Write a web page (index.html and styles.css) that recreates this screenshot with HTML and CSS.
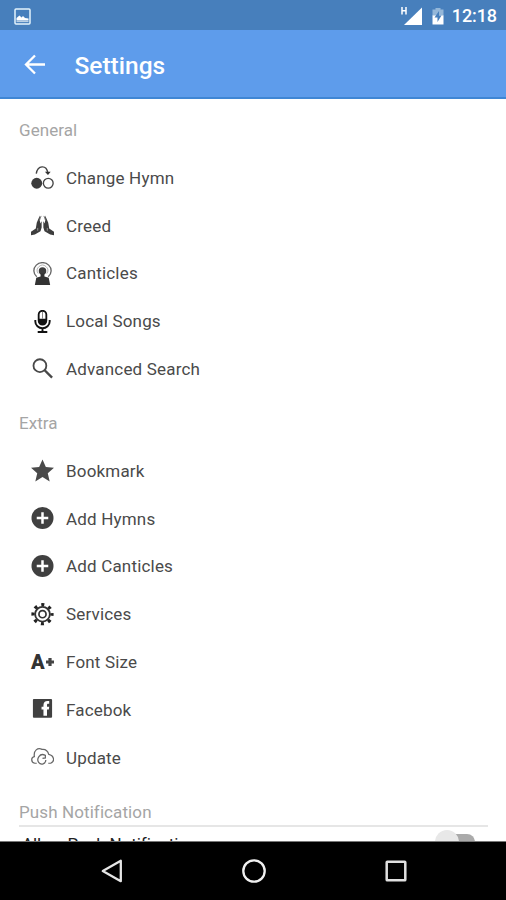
FILE: index.html
```html
<!DOCTYPE html>
<html lang="en">
<head>
<meta charset="utf-8">
<title>Settings</title>
<link rel="stylesheet" href="styles.css">
</head>
<body>
<div class="screen">
  <div class="status">
    <svg class="photo" width="17" height="17" viewBox="0 0 17 17"><rect x="1" y="1" width="15" height="15" rx="1" fill="none" stroke="#e4f4fc" stroke-width="1.5"/><path d="M2.500 12.500V10L5.500 7.500 7.500 9.500 9 8 11 10 14.500 10.500V12.500z" fill="#fff"/><path d="M2.500 13.500h12" stroke="#b9cfe4" stroke-width="1.200"/></svg>
    <svg class="signal" width="22" height="20" viewBox="0 0 22 20"><path d="M2 1v7.500M6 1v7.500M2 4.800h4" fill="none" stroke="#fff" stroke-width="1.500"/><path d="M22 1.500V19H4z" fill="#fff"/></svg>
    <svg class="battery" width="12" height="18" viewBox="0 0 12 18"><path d="M3.500 1h5v1.500H11.500V9H.5V2.500h3z" fill="#94b7d9"/><path d="M.5 8.500h11V17.500H.5z" fill="#fff"/><path d="M7 4 2.500 10.500H5.500V15L9.500 8.500H7z" fill="#477fbc"/></svg>
    <span class="clock">12:18</span>
  </div>
  <header class="bar">
    <svg width="22" height="22" viewBox="0 0 22 22"><path d="M11 2.500 2 11.500l9 9M2.500 11.500H21" fill="none" stroke="#fff" stroke-width="2.300"/></svg>
    <h1>Settings</h1>
  </header>
  <main>
    <h2>General</h2>
    <ul>
      <li><svg viewBox="0 0 24 24"><path d="M5.500 8C7 -1 16 -1.500 17.500 7" fill="none" stroke="#444" stroke-width="1.500"/><path d="M14.500 6h6l-2.800 3.500z" fill="#333"/><circle cx="6" cy="18" r="5.700" fill="#3c3c3c"/><circle cx="18" cy="18" r="5.100" fill="none" stroke="#444" stroke-width="1.400"/></svg><span>Change Hymn</span></li>
      <li><svg viewBox="0 0 24 24"><path d="M9.200 1.500 6 9 5 15 0 18.500v3.700l4-.7 5.900-3.500 1.200-4V7.500L9.500 10z" fill="#3d3d3d"/><path d="M14.800 1.500 18 9l1 6 5 3.500v3.700l-4-.7-5.900-3.500-1.200-4V7.500L14.500 10z" fill="#3d3d3d"/><path d="M10.500 2 8.500 7.500M13.500 2l2 5.500" stroke="#777" stroke-width="1"/><path d="M7 14.500v3M17 14.500v3" stroke="#999"/></svg><span>Creed</span></li>
      <li><svg viewBox="0 0 24 24"><circle cx="12" cy="9.500" r="3.900" fill="#3d3d3d"/><path d="M10 12h4v3l4.500 1.500 1.500 7.500H4l1.500-7.500L10 15z" fill="#333"/><path d="M6 15.500A9 8.500 0 1 1 18 15.500" fill="none" stroke="#666" stroke-width="1.400"/><path d="M7.500 12A5.500 5.500 0 1 1 16.500 12" fill="none" stroke="#999" stroke-width=".8"/></svg><span>Canticles</span></li>
      <li><svg viewBox="0 0 24 24"><rect x="8" y=".8" width="8" height="14.500" rx="4" fill="#fff" stroke="#111" stroke-width="1.900"/><path d="M8 9h8v2.500a4 4 0 0 1-8 0z" fill="#111"/><path d="M12 2v7" stroke="#666" stroke-width=".8"/><path d="M4.500 10.500v1.500a7.500 7 0 0 0 15 0v-1.500M12 19v4M7 23h10" fill="none" stroke="#111" stroke-width="2"/></svg><span>Local Songs</span></li>
      <li><svg viewBox="0 0 24 24"><circle cx="9.300" cy="8" r="6.700" fill="none" stroke="#484848" stroke-width="1.900"/><path d="m14 12.500 8 8" stroke="#484848" stroke-width="2.500"/></svg><span>Advanced Search</span></li>
    </ul>
    <h2 class="extra">Extra</h2>
    <ul>
      <li><svg viewBox="0 0 24 24"><path d="m12 .4 3.500 7.900 8.500.7-6.500 5.800 2 8.600L12 18.900l-7.500 4.500 2-8.600L0 9l8.500-.7z" fill="#4a4a4a"/></svg><span>Bookmark</span></li>
      <li><svg viewBox="0 0 24 24"><circle cx="12" cy="11.500" r="11.500" fill="#404040"/><path d="M12 5.500v12M6 11.500h12" stroke="#fff" stroke-width="2.600"/></svg><span>Add Hymns</span></li>
      <li><svg viewBox="0 0 24 24"><circle cx="12" cy="11.500" r="11.500" fill="#404040"/><path d="M12 5.500v12M6 11.500h12" stroke="#fff" stroke-width="2.600"/></svg><span>Add Canticles</span></li>
      <li><svg viewBox="0 0 24 24"><circle cx="12" cy="11.700" r="9.900" fill="none" stroke="#222" stroke-width="3.400" stroke-dasharray="3.200 4.575" stroke-dashoffset="1.600"/><circle cx="12" cy="11.700" r="7.700" fill="none" stroke="#333" stroke-width="1.900"/><circle cx="12" cy="11.700" r="3.700" fill="none" stroke="#333" stroke-width="1.800"/></svg><span>Services</span></li>
      <li><span class="font-icon">A<svg viewBox="0 0 8 8"><path d="M4 0v8M0 4h8" stroke="#444" stroke-width="3.200"/></svg></span><span>Font Size</span></li>
      <li><svg viewBox="0 0 24 24"><rect x="2" y="1" width="20" height="19.500" rx="1" fill="#404040"/><path d="M13 18.500V12h-2V9h2V7.500c0-3 1.500-4.500 4.300-4.500H19v3h-1c-1 0-1.300.5-1.300 1.500V9H19l-.4 3h-1.900v6.500z" fill="#fff"/></svg><span>Facebok</span></li>
      <li><svg viewBox="0 0 24 24"><path d="M6 18H4C-.5 17 0 11.500 3.500 11 2.500 4.500 7 1.500 11.500 3.500c4-.5 6 1.500 7 5.200C24 10 25.500 16 20.500 18H18" fill="none" stroke="#666" stroke-width="1.300"/><path d="M14.500 9.500C9 7 5.500 13.500 8 17c2.500 3.500 7.500 1.500 7.500-2.500M12 13l3-.5V9" fill="none" stroke="#666" stroke-width="1.300"/></svg><span>Update</span></li>
    </ul>
    <h2 class="push">Push Notification</h2>
    <div class="allow"><span>Allow Push Notification</span><i class="toggle"></i></div>
  </main>
  <nav>
    <svg width="26" height="26" viewBox="0 0 26 26"><path d="M21.800 2.800v20.400L3.800 13z" fill="none" stroke="#e6e6e6" stroke-width="2.300" stroke-linejoin="round"/></svg>
    <svg width="26" height="26" viewBox="0 0 26 26"><circle cx="13" cy="13" r="10.700" fill="none" stroke="#f0f0f0" stroke-width="2.300"/></svg>
    <svg width="26" height="26" viewBox="0 0 26 26"><rect x="3.700" y="3.700" width="18.600" height="18.600" rx=".6" fill="none" stroke="#e0e0e0" stroke-width="2.500"/></svg>
  </nav>
</div>
</body>
</html>
```
FILE: styles.css
```css
* { box-sizing: border-box; }
body { margin: 0; font-family: Roboto, sans-serif; background: #fff; }
svg { display: block; flex: none; }
.screen { width: 506px; height: 900px; display: flex; flex-direction: column; overflow: hidden; }
.status { height: 30px; flex: none; background: #477fbc; display: flex; align-items: center; padding: 2px 9px 0 14px; }
.signal { margin-left: auto; margin-right: 10px; }
.battery { margin-right: 8px; }
.clock { color: #fff; font-size: 18px; font-weight: 500; line-height: 20px; letter-spacing: -.1px; }
.bar { height: 69px; flex: none; background: #5e9ceb; border-bottom: 2px solid #3f86d4; display: flex; align-items: center; padding: 0 24px; gap: 28.500px; }
.bar h1 { margin: 4px 0 0; color: #fff; font-size: 24.500px; font-weight: 500; line-height: 30px; }
main { flex: 1; min-height: 0; overflow: hidden; padding: 0 18px 0 19px; border-bottom: 1px solid #777; }
h2 { margin: 0; height: 55px; padding-top: 19px; font-size: 17px; line-height: 24px; font-weight: 400; color: #a5a5a5; letter-spacing: .05px; }
h2.extra { height: 54px; padding-top: 18px; }
h2.push { height: 45px; padding-top: 18px; border-bottom: 2px solid #e6e6e6; letter-spacing: .1px; }
ul { list-style: none; margin: 0; padding: 0; }
li { height: 47.8px; display: flex; align-items: center; padding-left: 12px; gap: 12px; font-size: 17px; letter-spacing: .18px; color: #4a4a4a; }
li svg { width: 23px; height: 23px; }
.font-icon { width: 23px; display: flex; align-items: center; justify-content: space-between; font-size: 20px; font-weight: 900; line-height: 24px; letter-spacing: 0; color: #333; }
.font-icon svg { width: 8px; height: 8px; }
.allow { display: flex; justify-content: space-between; padding: 7px 13px 0 3px; font-size: 17px; line-height: 20px; letter-spacing: -.08px; color: #222; }
.toggle { position: relative; width: 39px; height: 16px; margin-top: 0; background: #aaa; border-radius: 8px; }
.toggle::before { content: ""; position: absolute; left: -1px; top: -4px; width: 24px; height: 24px; border-radius: 50%; background: #e8e8e8; }
nav { height: 58px; flex: none; background: #000; display: flex; justify-content: space-between; align-items: center; padding: 0 97px 0 99px; }
```
